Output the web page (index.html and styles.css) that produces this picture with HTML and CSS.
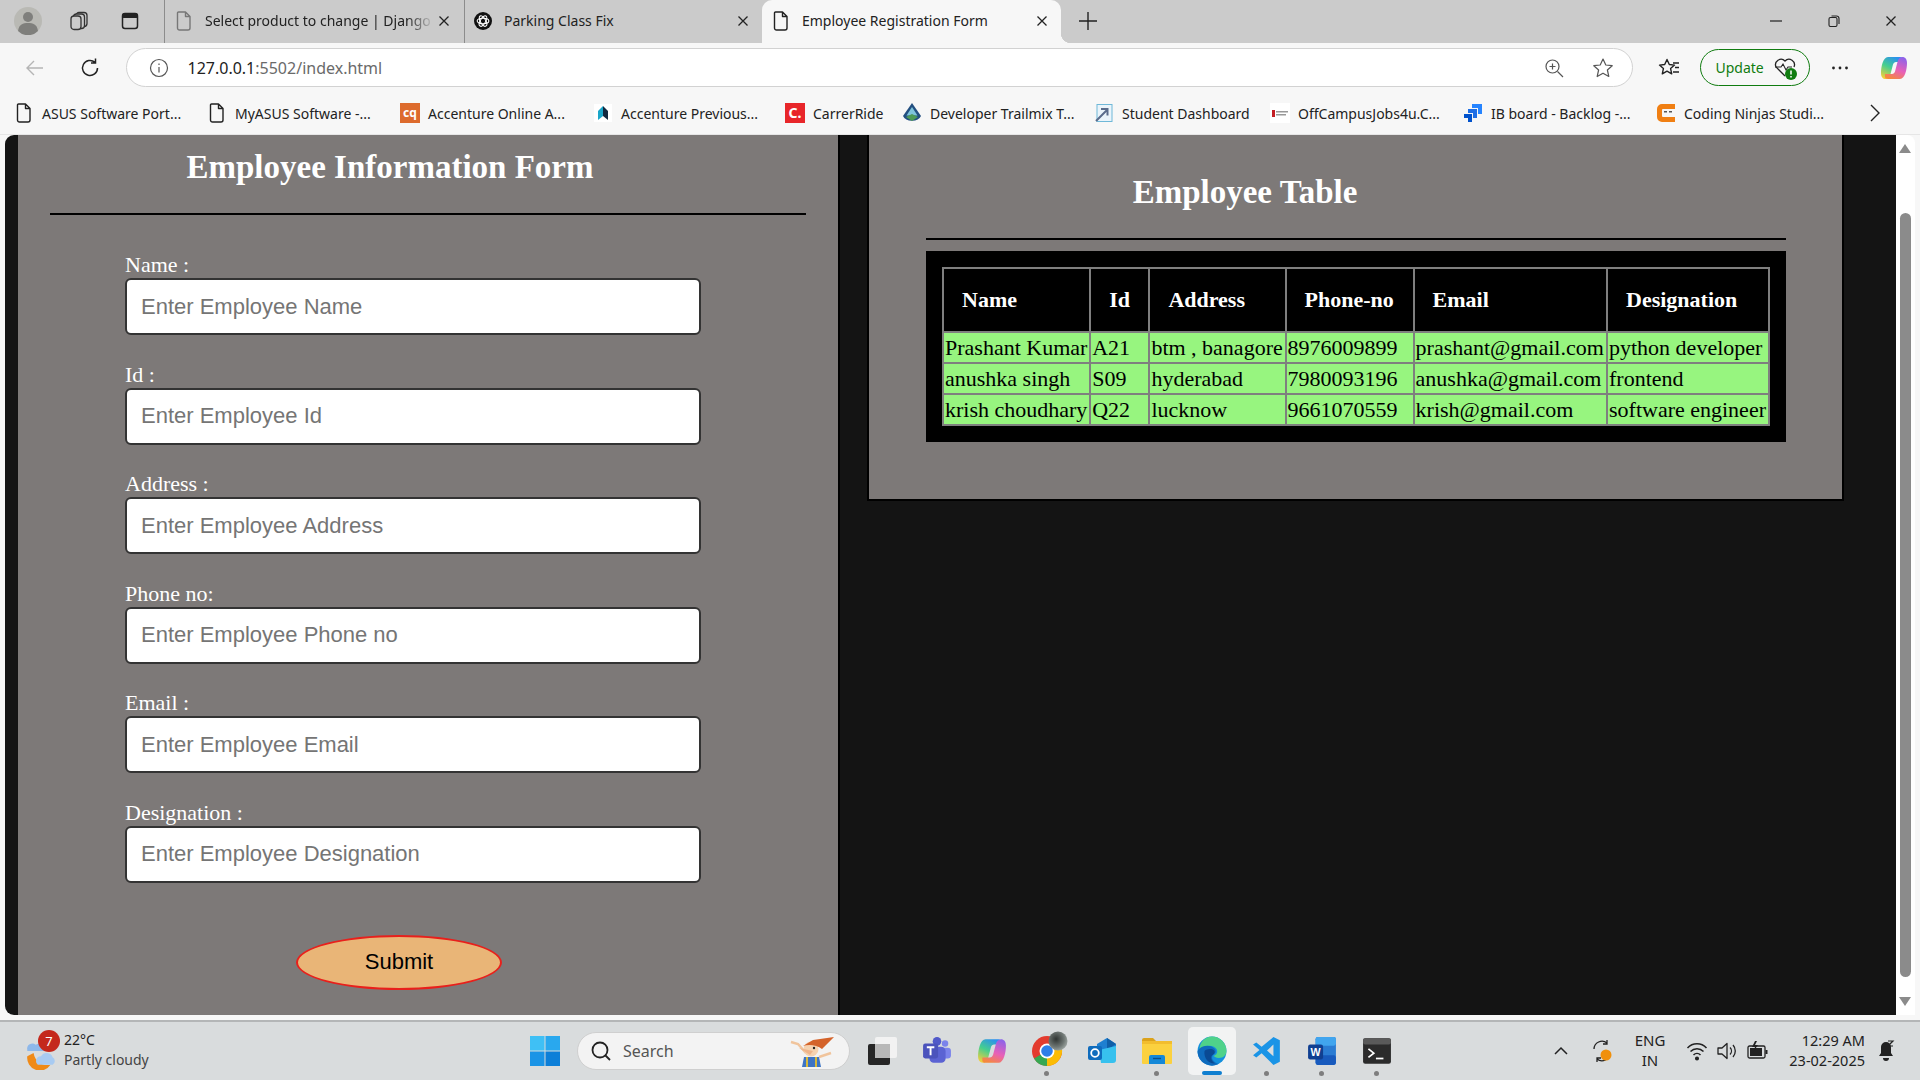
FILE: index.html
```html
<!DOCTYPE html>
<html lang="en">
<head>
    <meta charset="UTF-8">
    <title>Employee Registration Form</title>
    <link rel="stylesheet" href="styles.css">
</head>
<body>
    <svg class="defs" width="0" height="0">
        <defs>
            <symbol id="doc" viewBox="0 0 16 20">
                <path d="M2.5 1h7L14 5.5V17a2 2 0 0 1-2 2H3.500a2 2 0 0 1-2-2V2a1 1 0 0 1 1-1zM9.500 1v4.500H14" fill="none" stroke="currentColor" stroke-width="1.400" stroke-linejoin="round"/>
            </symbol>
            <symbol id="close" viewBox="0 0 12 12">
                <path d="M1.500 1.500l9 9M10.500 1.500l-9 9" fill="none" stroke="currentColor" stroke-width="1.300"/>
            </symbol>
            <linearGradient id="copA" x1="0.7" y1="0" x2="0.2" y2="1">
                <stop offset="0" stop-color="#2a8ff0"/>
                <stop offset="0.5" stop-color="#45cf8e"/>
                <stop offset="1" stop-color="#f5cf3a"/>
            </linearGradient>
            <linearGradient id="copB" x1="0.7" y1="0" x2="0.3" y2="1">
                <stop offset="0" stop-color="#8f63e8"/>
                <stop offset="0.55" stop-color="#e860b8"/>
                <stop offset="1" stop-color="#f5893c"/>
            </linearGradient>
            <radialGradient id="avatarBlob" cx="0.4" cy="0.4" r="0.7">
                <stop offset="0" stop-color="#2f3432"/>
                <stop offset="0.6" stop-color="#6e7673"/>
                <stop offset="1" stop-color="#a9b1ad"/>
            </radialGradient>
            <symbol id="copilot" viewBox="0 0 28 28">
                <path d="M8 3H20c2 0 3 1 3 2v3H16c-1.500 0-2.500 1-3 2.500L10.500 20c-.5 3-2.500 5-5 5S1 23 1 19C1 13 3 3 8 3z" fill="url(#copA)"/>
                <path d="M20 25H8c-2 0-3-1-3-2v-3h7c1.500 0 2.500-1 3-2.500L17.500 8c.5-3 2.500-5 5-5S27 5 27 9c0 6-2 16-7 16z" fill="url(#copB)"/>
            </symbol>
        </defs>
    </svg>

    <div class="tabbar">
        <div class="tool-btn">
            <svg class="ico-avatar" viewBox="0 0 28 28"><circle cx="14" cy="14" r="14" fill="#b9b9b4"/><circle cx="14" cy="10" r="5" fill="#7f7f7c"/><path d="M4 24c1-7 5-8 10-8s9 1 10 8a14 14 0 0 1-20 0z" fill="#7f7f7c"/></svg>
        </div>
        <div class="tool-btn">
            <svg class="ico-20" viewBox="0 0 20 20" fill="none" stroke="#333" stroke-width="1.300"><rect x="7" y="1.500" width="11" height="14" rx="3"/><rect x="4.500" y="3" width="11" height="14.500" rx="3" fill="#cbcbcb"/><rect x="2" y="5" width="10" height="13.500" rx="3" fill="#cbcbcb"/></svg>
        </div>
        <div class="tool-btn">
            <svg class="ico-20" viewBox="0 0 20 20"><rect x="2.500" y="2.500" width="15" height="15" rx="2.500" fill="none" stroke="#222" stroke-width="1.500"/><rect x="2.500" y="2.500" width="15" height="4.500" rx="1" fill="#222"/></svg>
        </div>
        <div class="tabs">
            <div class="tab">
                <svg class="tab-ico tab-ico-dim"><use href="#doc"/></svg>
                <span class="tab-title">Select product to change | Django</span>
                <svg class="tab-close"><use href="#close"/></svg>
            </div>
            <div class="tab">
                <svg class="tab-ico" viewBox="0 0 20 20"><circle cx="10" cy="10" r="10" fill="#111"/><g fill="none" stroke="#fff" stroke-width="1.200"><ellipse cx="10" cy="10" rx="6.500" ry="3"/><ellipse cx="10" cy="10" rx="6.500" ry="3" transform="rotate(60 10 10)"/><ellipse cx="10" cy="10" rx="6.500" ry="3" transform="rotate(120 10 10)"/></g></svg>
                <span class="tab-title">Parking Class Fix</span>
                <svg class="tab-close"><use href="#close"/></svg>
            </div>
            <div class="tab tab-active">
                <svg class="tab-ico"><use href="#doc"/></svg>
                <span class="tab-title">Employee Registration Form</span>
                <svg class="tab-close"><use href="#close"/></svg>
            </div>
        </div>
        <div class="new-tab">
            <svg class="ico-20" viewBox="0 0 20 20"><path d="M10 1v18M1 10h18" stroke="#222" stroke-width="1.400"/></svg>
        </div>
        <div class="win-btns">
            <div class="win-btn"><svg class="ico-12" viewBox="0 0 12 12"><path d="M0 6h12" stroke="#222" stroke-width="1.200"/></svg></div>
            <div class="win-btn"><svg class="ico-12" viewBox="0 0 12 12" fill="none" stroke="#222" stroke-width="1.100"><rect x="1" y="2.500" width="8" height="9" rx="1.500"/><path d="M3.500 1h5a2.500 2.500 0 0 1 2.500 2.500V9"/></svg></div>
            <div class="win-btn"><svg class="ico-12"><use href="#close"/></svg></div>
        </div>
    </div>

    <div class="toolbar">
        <div class="nav-btn">
            <svg class="ico-20" viewBox="0 0 20 20" fill="none" stroke="#b5b5b5" stroke-width="1.400"><path d="M18 10H2M9 3l-7 7 7 7"/></svg>
        </div>
        <div class="nav-btn">
            <svg class="ico-22" viewBox="0 0 22 22" fill="none" stroke="#222" stroke-width="1.500"><path d="M18.500 11a7.500 7.500 0 1 1-2.500-5.600M16.500 1.500v4.500H12"/></svg>
        </div>
        <div class="urlbar">
            <svg class="ico-20 url-info" viewBox="0 0 20 20" fill="none" stroke="#555" stroke-width="1.200"><circle cx="10" cy="10" r="8.500"/><path d="M10 9v5.500M10 5.500v1.500"/></svg>
            <span class="url-text"><span class="url-host">127.0.0.1</span>:5502/index.html</span>
            <svg class="ico-20 url-zoom" viewBox="0 0 20 20" fill="none" stroke="#555" stroke-width="1.200"><circle cx="8.500" cy="8.500" r="6.500"/><path d="M13.500 13.500L19 19M8.500 5.500v6M5.500 8.500h6"/></svg>
            <svg class="ico-22 url-star" viewBox="0 0 22 22" fill="none" stroke="#555" stroke-width="1.200"><path d="M11 2l2.800 6 6.400.7-4.800 4.300 1.400 6.500L11 16.200 5.200 19.500 6.600 13 1.800 8.700 8.200 8z" stroke-linejoin="round"/></svg>
        </div>
        <div class="nav-btn nav-favs">
            <svg class="ico-22" viewBox="0 0 22 22" fill="none" stroke="#222" stroke-width="1.400"><path d="M9 2.500l2.300 5 5.200.6-3.900 3.500 1.100 5.200L9 14.200l-4.700 2.600 1.100-5.200L1.500 8.100l5.200-.6zM15 6h6M17 10.500h4M15 15h6" stroke-linejoin="round"/></svg>
        </div>
        <div class="update-pill">
            <span>Update</span>
            <svg class="ico-26" viewBox="0 0 26 26"><path d="M13 21L4 12a5.500 5.500 0 0 1 9-6 5.500 5.500 0 0 1 9 6" fill="none" stroke="#222" stroke-width="1.300"/><path d="M3 12h6l2-3 3 6 2-3h4" fill="none" stroke="#222" stroke-width="1.100"/><circle cx="19" cy="19" r="6" fill="#107c10"/><path d="M19 15.500v4M19 21v1.500" stroke="#fff" stroke-width="1.500"/></svg>
        </div>
        <div class="more-btn">
            <svg class="ico-20" viewBox="0 0 20 20" fill="#222"><circle cx="3.500" cy="10" r="1.400"/><circle cx="10" cy="10" r="1.400"/><circle cx="16.500" cy="10" r="1.400"/></svg>
        </div>
        <svg class="ico-copilot"><use href="#copilot"/></svg>
    </div>

    <div class="bookmarks">
        <div class="bm">
            <svg class="bm-ico"><use href="#doc"/></svg>
            <span class="bm-text">ASUS Software Port...</span>
        </div>
        <div class="bm">
            <svg class="bm-ico"><use href="#doc"/></svg>
            <span class="bm-text">MyASUS Software -...</span>
        </div>
        <div class="bm">
            <span class="bm-square bm-cq">cq</span>
            <span class="bm-text">Accenture Online A...</span>
        </div>
        <div class="bm">
            <svg class="bm-ico" viewBox="0 0 20 20"><rect x="1" y="1" width="18" height="18" fill="#fff"/><path d="M10 3l5 5v9l-5-4z" fill="#12283f"/><path d="M10 3L5 8v9l5-4z" fill="#1aa6c9"/></svg>
            <span class="bm-text">Accenture Previous...</span>
        </div>
        <div class="bm">
            <span class="bm-square bm-c">C.</span>
            <span class="bm-text">CarrerRide</span>
        </div>
        <div class="bm">
            <svg class="bm-ico" viewBox="0 0 20 20"><path d="M10 0l9 13a9.500 7 0 0 1-18 0z" fill="#234f80"/><path d="M10 4l5.500 8.500h-11z" fill="#7fc4dc"/><path d="M4 14l6-3 6 3-6 4z" fill="#4d9a57"/></svg>
            <span class="bm-text">Developer Trailmix T...</span>
        </div>
        <div class="bm">
            <svg class="bm-ico" viewBox="0 0 20 20" fill="none"><rect x="3" y="1.500" width="15" height="17" fill="#eaf4fb" stroke="#6fb8d8"/><path d="M2 18L13 7M7 6h6.500v6.500" stroke="#5a6c8c" stroke-width="2"/></svg>
            <span class="bm-text">Student Dashboard</span>
        </div>
        <div class="bm">
            <svg class="bm-ico" viewBox="0 0 20 20"><rect x="0" y="0" width="20" height="20" fill="#fff"/><path d="M2 7h3v7H2z" fill="#c41e24"/><path d="M6 8h12v1.500H6zM6 11h10v1.500H6z" fill="#999"/></svg>
            <span class="bm-text">OffCampusJobs4u.C...</span>
        </div>
        <div class="bm">
            <svg class="bm-ico" viewBox="0 0 20 20"><path d="M9 1h10v10h-4V5H9z" fill="#2684ff"/><path d="M5 6h9v9h-4V10H5z" fill="#1f6fe5"/><path d="M1 11h8v8H5v-4H1z" fill="#0052cc"/></svg>
            <span class="bm-text">IB board - Backlog -...</span>
        </div>
        <div class="bm">
            <svg class="bm-ico" viewBox="0 0 20 20"><path d="M6 1h13v5H7a1 1 0 0 0-1 1v6a1 1 0 0 0 1 1h12v5H6a5 5 0 0 1-5-5V6a5 5 0 0 1 5-5z" fill="#f07f13"/><rect x="8" y="8" width="3" height="1.500" fill="#555"/><rect x="13" y="8" width="3" height="1.500" fill="#555"/></svg>
            <span class="bm-text">Coding Ninjas Studi...</span>
        </div>
        <svg class="bm-more" viewBox="0 0 12 20"><path d="M2 2l8 8-8 8" fill="none" stroke="#222" stroke-width="1.400"/></svg>
    </div>

    <div class="content-row">
        <main class="viewport">
            <section class="form-panel">
                <h2 class="form-title">Employee Information Form</h2>
                <hr class="rule">
                <form class="emp-form">
                    <div class="field">
                        <label for="empName">Name :</label>
                        <input id="empName" type="text" placeholder="Enter Employee Name">
                    </div>
                    <div class="field">
                        <label for="empId">Id :</label>
                        <input id="empId" type="text" placeholder="Enter Employee Id">
                    </div>
                    <div class="field">
                        <label for="empAddress">Address :</label>
                        <input id="empAddress" type="text" placeholder="Enter Employee Address">
                    </div>
                    <div class="field">
                        <label for="empPhone">Phone no:</label>
                        <input id="empPhone" type="text" placeholder="Enter Employee Phone no">
                    </div>
                    <div class="field">
                        <label for="empEmail">Email :</label>
                        <input id="empEmail" type="text" placeholder="Enter Employee Email">
                    </div>
                    <div class="field">
                        <label for="empDesignation">Designation :</label>
                        <input id="empDesignation" type="text" placeholder="Enter Employee Designation">
                    </div>
                    <button type="button" class="submit-btn">Submit</button>
                </form>
            </section>

            <section class="table-panel">
                <h2 class="table-title">Employee Table</h2>
                <hr class="rule">
                <div class="table-box">
                    <table class="emp-table">
                        <thead>
                            <tr>
                                <th>Name</th>
                                <th>Id</th>
                                <th>Address</th>
                                <th>Phone-no</th>
                                <th>Email</th>
                                <th>Designation</th>
                            </tr>
                        </thead>
                        <tbody>
                            <tr>
                                <td>Prashant Kumar</td>
                                <td>A21</td>
                                <td>btm , banagore</td>
                                <td>8976009899</td>
                                <td>prashant@gmail.com</td>
                                <td>python developer</td>
                            </tr>
                            <tr>
                                <td>anushka singh</td>
                                <td>S09</td>
                                <td>hyderabad</td>
                                <td>7980093196</td>
                                <td>anushka@gmail.com</td>
                                <td>frontend</td>
                            </tr>
                            <tr>
                                <td>krish choudhary</td>
                                <td>Q22</td>
                                <td>lucknow</td>
                                <td>9661070559</td>
                                <td>krish@gmail.com</td>
                                <td>software engineer</td>
                            </tr>
                        </tbody>
                    </table>
                </div>
            </section>
        </main>
        <div class="scrollbar">
            <div class="scroll-up"></div>
            <div class="scroll-thumb"></div>
            <div class="scroll-down"></div>
        </div>
    </div>

    <footer class="taskbar">
        <div class="weather">
            <svg class="weather-ico" viewBox="0 0 32 36"><path d="M3 17a5 5 0 0 1 8-5 6 6 0 0 1 9 6H3z" fill="#8db8ea"/><path d="M3 23a12 12 0 0 0 22 8A13 13 0 0 1 9 20z" fill="#ef8a17"/><path d="M13 31a4.500 4.500 0 0 1 3-8 6 6 0 0 1 11 1 4 4 0 0 1 0 7H14z" fill="#a8cbf2"/></svg>
            <span class="weather-badge">7</span>
            <div class="weather-text">
                <span class="weather-temp">22°C</span>
                <span class="weather-desc">Partly cloudy</span>
            </div>
        </div>
        <div class="task-center">
            <svg class="win-logo" viewBox="0 0 30 30"><rect width="14.500" height="14.500" fill="#3fc0f5"/><rect x="15.500" width="14.500" height="14.500" fill="#29a8ee"/><rect y="15.500" width="14.500" height="14.500" fill="#1a94e6"/><rect x="15.500" y="15.500" width="14.500" height="14.500" fill="#0c7fd8"/></svg>
            <div class="task-search">
                <svg class="ico-22" viewBox="0 0 22 22" fill="none" stroke="#222" stroke-width="1.800"><circle cx="10" cy="10" r="7.500"/><path d="M15 15l5 5"/></svg>
                <span class="search-text">Search</span>
                <svg class="search-art" viewBox="0 0 45 31"><path d="M2 6l7 2 8 9" fill="none" stroke="#f0c49c" stroke-width="2.500"/><path d="M30 21l12-4" fill="none" stroke="#f0c49c" stroke-width="2.500"/><path d="M15 21h15l2 10H13z" fill="#3d74c4"/><path d="M18 21v10M27 21v10" stroke="#e8c02a" stroke-width="1.800"/><circle cx="22" cy="13" r="7.500" fill="#f5d2b0"/><path d="M14 10L24 4l21-3-12 12c-5-4-13-5-19-3z" fill="#d4632a"/><path d="M24 15L10 12l11 7z" fill="#eeb58c"/><circle cx="25" cy="12" r="1.200" fill="#222"/></svg>
            </div>
            <div class="app-slot">
                <svg class="app-ico" viewBox="0 0 30 30"><rect x="1" y="8" width="22" height="21" rx="2" fill="#262626"/><rect x="8" y="1" width="22" height="21" rx="2" fill="#f2f2f2"/><rect x="8" y="8" width="15" height="14" fill="#b8b8b8"/></svg>
            </div>
            <div class="app-slot">
                <svg class="app-ico" viewBox="0 0 28 28"><circle cx="21.500" cy="7" r="3" fill="#7b83eb"/><rect x="17" y="11" width="10" height="10" rx="3" fill="#7b83eb"/><circle cx="14" cy="5" r="4" fill="#5059c9"/><rect x="7" y="10" width="15" height="15" rx="4" fill="#5b63d3"/><rect x="1" y="7" width="14" height="14" rx="2" fill="#4b53bc"/><path d="M4.500 10.500h7M8 10.500v7.500" stroke="#fff" stroke-width="1.800"/></svg>
            </div>
            <div class="app-slot">
                <svg class="app-ico"><use href="#copilot"/></svg>
            </div>
            <div class="app-slot app-open">
                <svg class="app-ico app-chrome" viewBox="0 0 30 30"><circle cx="15" cy="15" r="15" fill="#e33b2e"/><path d="M15 15L2 22.500A15 15 0 0 0 15 30z" fill="#36a852"/><path d="M15 15v15A15 15 0 0 0 28 7.500z" fill="#fbbc05"/><circle cx="15" cy="15" r="7.500" fill="#fff"/><circle cx="15" cy="15" r="5.800" fill="#2f7fe8"/><circle cx="26" cy="5" r="9.500" fill="url(#avatarBlob)"/></svg>
            </div>
            <div class="app-slot">
                <svg class="app-ico" viewBox="0 0 30 30"><path d="M10 8l10-6 9 6v4l-9 6-10-6z" fill="#1e7fd0"/><path d="M20 2l9 6-9 6z" fill="#0f5fa8"/><path d="M12 14l17-4v14a3 3 0 0 1-3 3H14z" fill="#37c1ee"/><rect x="1" y="10" width="14" height="14" rx="2" fill="#0f6cbd"/><circle cx="8" cy="17" r="3.800" fill="none" stroke="#fff" stroke-width="1.800"/></svg>
            </div>
            <div class="app-slot app-open">
                <svg class="app-ico" viewBox="0 0 30 30"><path d="M0 4a2 2 0 0 1 2-2h9l3 3h-14z" fill="#dba21b"/><rect x="0" y="5" width="30" height="23" rx="1" fill="#fbd13f"/><rect x="0" y="5" width="30" height="3" fill="#f2bd2e"/><path d="M7 21a2 2 0 0 1 2-2h12a2 2 0 0 1 2 2v7H7z" fill="#1488d8"/><path d="M11 22.500h8" stroke="#0b4f8a" stroke-width="1.400"/></svg>
            </div>
            <div class="app-slot app-active">
                <svg class="app-ico" viewBox="0 0 28 28"><circle cx="14" cy="14" r="13.500" fill="#1490dd"/><path d="M14 .5A13.500 13.500 0 0 1 27.500 14c0 4-3 6.500-7 6.500-3 0-5-1.500-5-2 3-1 4-3.500 3-6C16.500 8 7 7.500 2.500 13 2 7 7 .5 14 .5z" fill="#4fd28a"/><path d="M.5 15c0-2 3-6 9-6 5 0 8 3 8 5 0 1.500-1 3-2 3-1 1-2 3-1 5 1 2 4 4 6 4a13.500 13.500 0 0 1-20-11z" fill="#0f6bbd"/><path d="M7 14c2-2 7-2.500 9-.5 1 1 .5 3-1 4-3 1-2 6 2 8-5 1-11-4-10-11.500z" fill="#0a4a94"/></svg>
            </div>
            <div class="app-slot">
                <svg class="app-ico" viewBox="0 0 28 28"><path d="M20 1l6 3v20l-6 3L9 16l-5 4-3-2 6-5-6-5 3-2 5 4z" fill="#1a94e6"/><path d="M20 8l-6 5.500 6 5.500z" fill="#d9dcdd"/></svg>
            </div>
            <div class="app-slot">
                <svg class="app-ico" viewBox="0 0 28 28"><rect x="8" y="1" width="19" height="26" rx="2" fill="#2b7cd3"/><rect x="8" y="1" width="19" height="8" rx="2" fill="#41a5ee"/><rect x="8" y="18" width="19" height="9" rx="2" fill="#185abd"/><rect x="1" y="8" width="14" height="14" rx="2" fill="#103f91"/><text x="8" y="19" class="word-w">W</text></svg>
            </div>
            <div class="app-slot">
                <svg class="app-ico" viewBox="0 0 28 28"><rect x="1" y="2" width="26" height="24" rx="2" fill="#2b2b2b"/><rect x="1" y="2" width="26" height="6" rx="2" fill="#5a5a5a"/><path d="M6 12l5 4-5 4" fill="none" stroke="#fff" stroke-width="1.600"/><path d="M13 21h7" stroke="#fff" stroke-width="1.600"/></svg>
            </div>
        </div>
        <div class="tray">
            <svg class="tray-chevron" viewBox="0 0 14 10"><path d="M1 8l6-6 6 6" fill="none" stroke="#222" stroke-width="1.500"/></svg>
            <svg class="tray-sync" viewBox="0 0 22 24"><path d="M3 10a8 8 0 0 1 13-6M19 14a8 8 0 0 1-13 6M16 1v4h-4M6 23v-4h4" fill="none" stroke="#222" stroke-width="1.300"/><circle cx="15" cy="16" r="5.500" fill="#f0900c"/></svg>
            <div class="tray-lang"><span>ENG</span><span>IN</span></div>
            <svg class="tray-ico" viewBox="0 0 22 22" fill="none" stroke="#222" stroke-width="1.500"><path d="M1.500 8a13 13 0 0 1 19 0M4.500 11.500a9 9 0 0 1 13 0M7.500 15a5 5 0 0 1 7 0"/><circle cx="11" cy="18.500" r="1.300" fill="#222"/></svg>
            <svg class="tray-ico" viewBox="0 0 22 22" fill="none" stroke="#222" stroke-width="1.300"><path d="M2 8h4l5-4.500v15L6 14H2z" stroke-linejoin="round"/><path d="M14 7.500a5 5 0 0 1 0 7M17 5a9 9 0 0 1 0 12"/></svg>
            <svg class="tray-ico" viewBox="0 0 22 22"><rect x="2" y="6" width="17" height="12" rx="1.500" fill="none" stroke="#222" stroke-width="1.300"/><rect x="4" y="8" width="12" height="8" fill="#222"/><rect x="19.500" y="10" width="2" height="4" fill="#222"/><path d="M9 1L6 7h3l-2 5 5-7H9l2-4z" fill="#222"/></svg>
            <div class="tray-clock"><span>12:29 AM</span><span>23-02-2025</span></div>
            <svg class="tray-bell" viewBox="0 0 18 24"><path d="M9 3a5 5 0 0 0-5 5v6l-2 3h14l-2-3V8a5 5 0 0 0-5-5z" fill="#222"/><path d="M6 19a3 3 0 0 0 6 0z" fill="#222"/><path d="M11 2h5l-5 5h5" fill="none" stroke="#222" stroke-width="1.200"/></svg>
        </div>
    </footer>
</body>
</html>
```

FILE: styles.css
```css
* {
    margin: 0;
    padding: 0;
    box-sizing: border-box;
}

body {
    width: 1920px;
    height: 1080px;
    overflow: hidden;
    background: #f7f7f7;
    font-family: 'Noto Sans', 'Open Sans', sans-serif;
    color: #222;
}

.defs {
    display: block;
    height: 0;
}

.ico-12 { width: 12px; height: 12px; }
.ico-20 { width: 20px; height: 20px; }
.ico-22 { width: 22px; height: 22px; }
.ico-26 { width: 26px; height: 26px; }
.ico-avatar { width: 28px; height: 28px; }

/* browser tab strip */
.tabbar {
    display: flex;
    height: 43px;
    background: #cbcbcb;
    padding-left: 2px;
}

.tool-btn {
    width: 51px;
    display: flex;
    align-items: center;
    justify-content: center;
    padding-bottom: 2px;
}

.tabs {
    display: flex;
    margin-left: 9px;
}

.tab {
    position: relative;
    width: 300px;
    display: flex;
    align-items: center;
    padding: 0 14px 2px 10px;
    gap: 12px;
    border-left: 1px solid #8c8c8c;
    font-size: 14px;
}

.tab:nth-child(2) {
    width: 298px;
    padding-left: 9px;
    padding-right: 13px;
}

.tab-active {
    width: 299px;
    background: #f7f7f7;
    border-left: none;
    border-radius: 10px 10px 0 0;
    padding-left: 10px;
    padding-right: 13px;
}

.tab-active::after {
    content: "";
    position: absolute;
    right: -10px;
    bottom: 0;
    width: 10px;
    height: 10px;
    background: radial-gradient(circle at 100% 0, transparent 10px, #f7f7f7 10.5px);
}

.tab-ico {
    width: 18px;
    height: 20px;
    flex-shrink: 0;
}

.tab-ico-dim {
    color: #777;
}

.tab-title {
    flex: 1;
    white-space: nowrap;
}

.tab:first-child .tab-title {
    margin-right: -8px;
    -webkit-mask-image: linear-gradient(90deg, #000 88%, transparent);
    mask-image: linear-gradient(90deg, #000 88%, transparent);
}

.tab-close {
    width: 12px;
    height: 12px;
    flex-shrink: 0;
}

.new-tab {
    width: 50px;
    display: flex;
    align-items: center;
    justify-content: center;
    margin-left: 2px;
    padding-bottom: 2px;
}

.win-btns {
    margin-left: auto;
    display: flex;
}

.win-btn {
    width: 57.500px;
    display: flex;
    align-items: center;
    justify-content: center;
    padding-bottom: 2px;
    color: #222;
}

/* address bar row */
.toolbar {
    display: flex;
    align-items: center;
    height: 49px;
    background: #f7f7f7;
}

.nav-btn {
    width: 55px;
    display: flex;
    align-items: center;
    justify-content: center;
    margin-left: 7px;
}

.nav-btn + .nav-btn {
    margin-left: 0;
}

.urlbar {
    width: 1507px;
    height: 39px;
    margin-left: 8.500px;
    display: flex;
    align-items: center;
    background: #fff;
    border: 1px solid #d2d2d2;
    border-radius: 20px;
    padding: 0 18px 0 22px;
}

.url-text {
    margin-left: 19px;
    font-size: 16px;
    color: #6a6a6a;
}

.url-host {
    color: #222;
}

.url-zoom {
    margin-left: auto;
}

.url-star {
    margin-left: 28px;
}

.nav-favs {
    width: 40px;
    margin-left: 16px;
}

.update-pill {
    width: 110px;
    height: 37px;
    margin-left: 11px;
    display: flex;
    align-items: center;
    justify-content: space-between;
    padding: 0 11px 0 15px;
    border: 1.500px solid #107c10;
    border-radius: 19px;
    color: #107c10;
    font-size: 14px;
}

.more-btn {
    width: 60px;
    display: flex;
    justify-content: center;
}

.ico-copilot {
    width: 28px;
    height: 28px;
    margin-left: 10px;
}

/* favourites row */
.bookmarks {
    display: grid;
    grid-template-columns: 193px 193px 193px 192px 117px 192px 176px 193px 193px 176px 1fr;
    height: 43px;
    padding-left: 14px;
    align-items: center;
    background: #f7f7f7;
    border-bottom: 1px solid #e6e6e6;
}

.bm {
    display: flex;
    align-items: center;
    gap: 8px;
    font-size: 14px;
    white-space: nowrap;
}

.bm-ico {
    width: 20px;
    height: 20px;
    flex-shrink: 0;
}

.bm-square {
    width: 20px;
    height: 20px;
    flex-shrink: 0;
    color: #fff;
    font-weight: 700;
    text-align: center;
    line-height: 20px;
}

.bm-cq {
    background: #dd6b2d;
    font-size: 12px;
}

.bm-c {
    background: #e8262a;
    font-size: 14px;
}

.bm-more {
    width: 12px;
    height: 20px;
    margin-left: 37px;
}

/* page area */
.content-row {
    display: flex;
    height: 880px;
    padding: 0 5px;
}

.viewport {
    width: 1891px;
    display: flex;
    align-items: flex-start;
    background: #141414;
    border-radius: 9px 0 0 9px;
    font-family: 'Liberation Serif', serif;
    overflow: hidden;
}

.form-panel {
    width: 822px;
    height: 880px;
    margin-left: 13px;
    padding: 0 32px;
    background: #7d7978;
    border-right: 2px solid #000;
}

.form-title {
    height: 64px;
    padding-right: 76px;
    color: #fff;
    font-size: 33px;
    line-height: 64px;
    text-align: center;
}

.rule {
    height: 2px;
    border: none;
    background: #000;
}

.form-title + .rule {
    margin-top: 14px;
}

.emp-form {
    padding: 37px 105px 0 75px;
}

.field {
    height: 109.600px;
}

.field label {
    display: block;
    height: 26px;
    color: #fff;
    font-size: 22px;
    line-height: 26px;
}

.field input {
    display: block;
    width: 100%;
    height: 57px;
    padding: 0 14px;
    background: #fff;
    border: 2px solid #333;
    border-radius: 6px;
    font-family: 'Liberation Sans', sans-serif;
    font-size: 22px;
    color: #222;
}

.field input::placeholder {
    color: #757575;
}

.submit-btn {
    display: block;
    width: 206px;
    height: 55px;
    margin: 25px 0 0 171px;
    background: #e9b577;
    border: 2px solid #e8201c;
    border-radius: 50%;
    font-family: 'Liberation Sans', sans-serif;
    font-size: 22px;
    color: #000;
}

.table-panel {
    width: 977px;
    margin-left: 27px;
    padding: 0 56px 57px 57px;
    background: #7d7978;
    border: 2px solid #000;
    border-top: none;
}

.table-title {
    height: 103px;
    padding-right: 222px;
    color: #fff;
    font-size: 33px;
    line-height: 114px;
    text-align: center;
}

.table-box {
    margin-top: 11px;
    padding: 16px;
    background: #000;
}

.emp-table {
    width: 100%;
    border-collapse: collapse;
    font-size: 22px;
}

.emp-table th,
.emp-table td {
    border: 2px solid #7f7f7f;
    text-align: left;
    white-space: nowrap;
}

.emp-table th {
    height: 64px;
    padding: 0 18px;
    background: #000;
    color: #fff;
    font-size: 22px;
}

.emp-table td {
    height: 31px;
    padding: 0 1px;
    background: #97f57f;
    color: #000;
    line-height: 27px;
}

/* fake window scrollbar */
.scrollbar {
    width: 19px;
    position: relative;
    background: #fff;
    border-radius: 0 8px 0 0;
}

.scroll-up,
.scroll-down {
    position: absolute;
    left: 3px;
    width: 0;
    height: 0;
    border-left: 6px solid transparent;
    border-right: 6px solid transparent;
}

.scroll-up {
    top: 9px;
    border-bottom: 9px solid #8b8b8b;
}

.scroll-down {
    bottom: 9px;
    border-top: 9px solid #8b8b8b;
}

.scroll-thumb {
    position: absolute;
    top: 78px;
    left: 4px;
    width: 11px;
    height: 764px;
    background: #8b8b8b;
    border-radius: 6px;
}

/* windows taskbar */
.taskbar {
    position: relative;
    display: flex;
    align-items: center;
    height: 60px;
    margin-top: 5px;
    background: #d9dcdd;
    border-top: 2px solid #b4b6b7;
}

.weather {
    position: relative;
    display: flex;
    align-items: center;
    width: 530px;
    padding-left: 24px;
}

.weather-ico {
    width: 34px;
    height: 38px;
}

.weather-badge {
    position: absolute;
    left: 38px;
    top: -2px;
    width: 22px;
    height: 22px;
    background: #c4281c;
    border-radius: 50%;
    color: #fff;
    font-size: 13px;
    line-height: 22px;
    text-align: center;
}

.weather-text {
    display: flex;
    flex-direction: column;
    margin: -2px 0 0 6px;
    font-size: 14px;
    line-height: 20px;
}

.weather-desc {
    color: #444;
}

.task-center {
    display: flex;
    align-items: center;
}

.win-logo {
    width: 30px;
    height: 30px;
}

.task-search {
    width: 273px;
    height: 38px;
    margin: 0 4px 0 17px;
    display: flex;
    align-items: center;
    padding: 0 15px 0 12px;
    background: #f3f3f3;
    border: 1px solid #cfcfcf;
    border-radius: 19px;
}

.search-text {
    margin-left: 11px;
    font-size: 16px;
    color: #555;
}

.search-art {
    width: 45px;
    height: 31px;
    margin-left: auto;
}

.app-slot {
    position: relative;
    width: 55px;
    height: 48px;
    display: flex;
    align-items: center;
    justify-content: center;
}

.app-ico {
    width: 30px;
    height: 30px;
}

.app-chrome {
    overflow: visible;
}

.app-open::after,
.app-slot:nth-last-child(1)::after,
.app-slot:nth-last-child(2)::after,
.app-slot:nth-last-child(3)::after {
    content: "";
    position: absolute;
    left: 25px;
    bottom: -1px;
    width: 5px;
    height: 5px;
    background: #7e7e7e;
    border-radius: 50%;
}

.app-active {
    background: #f2f3f3;
    border-radius: 5px;
    width: 48px;
    margin: 0 3.500px;
}

.app-active::after {
    content: "";
    position: absolute;
    left: 14px;
    bottom: 0;
    width: 20px;
    height: 4px;
    background: #0f7fd0;
    border-radius: 2px;
}

.word-w {
    font-family: 'Liberation Sans', sans-serif;
    font-size: 10px;
    font-weight: 700;
    fill: #fff;
    text-anchor: middle;
}

.tray {
    margin-left: auto;
    display: flex;
    align-items: center;
    padding-right: 25px;
}

.tray-chevron {
    width: 14px;
    height: 10px;
}

.tray-sync {
    width: 22px;
    height: 24px;
    margin-left: 23px;
}

.tray-lang {
    display: flex;
    flex-direction: column;
    align-items: center;
    width: 40px;
    margin: -2px 0 0 17px;
    font-size: 15px;
    line-height: 20px;
}

.tray-ico {
    width: 22px;
    height: 22px;
    margin-right: 8px;
}

.tray-lang + .tray-ico {
    margin-left: 16px;
}

.tray-clock {
    display: flex;
    flex-direction: column;
    align-items: flex-end;
    width: 84px;
    margin: -2px 0 0 5px;
    font-size: 14.500px;
    line-height: 20px;
}

.tray-bell {
    width: 18px;
    height: 24px;
    margin-left: 12px;
}
```
